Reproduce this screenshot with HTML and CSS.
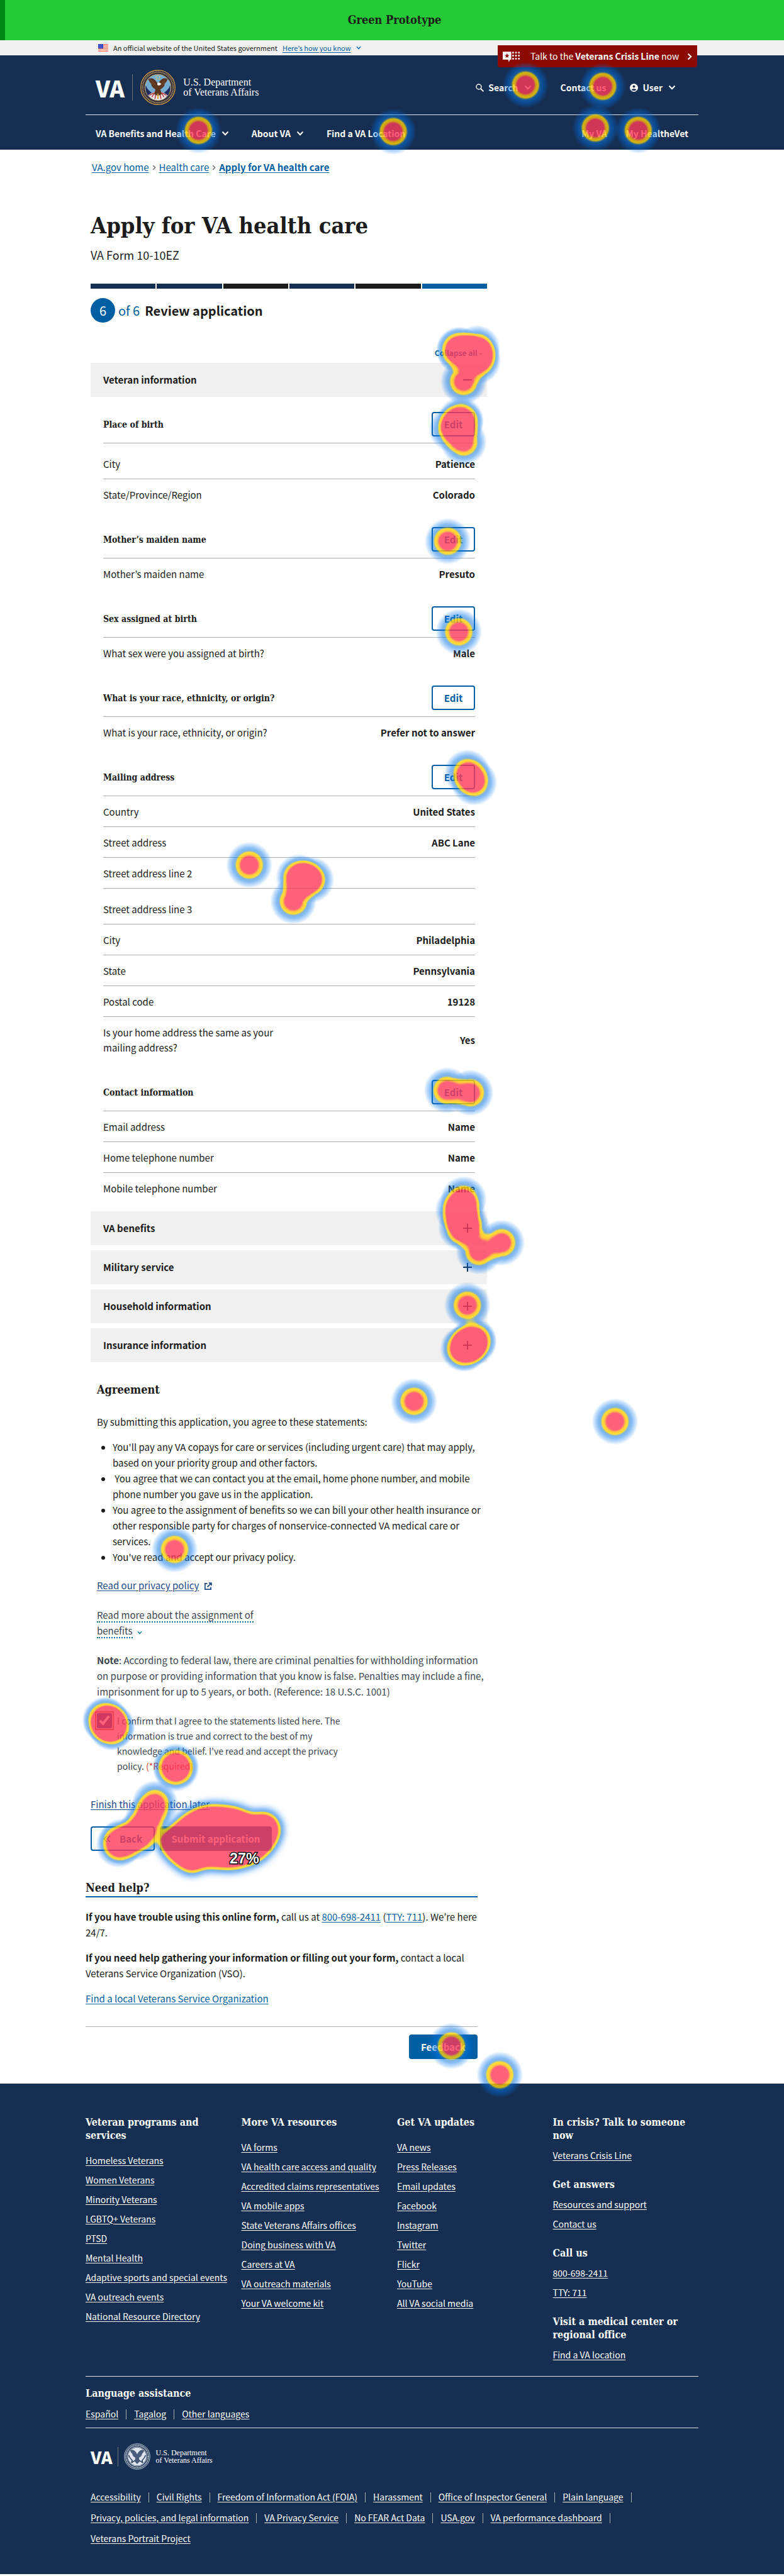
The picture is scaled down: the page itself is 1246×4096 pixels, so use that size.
FILE: index.html
```html
<!DOCTYPE html>
<html lang="en">
<head>
<meta charset="utf-8">
<meta name="viewport" content="width=device-width, initial-scale=1">
<title>Apply for VA health care</title>
<link rel="stylesheet" href="styles.css">
</head>
<body>
<svg class="sprite" aria-hidden="true">
  <symbol id="chev-down" viewBox="0 0 12 8"><path d="M1.5 1.5 6 6.2l4.500-4.700" fill="none" stroke="currentColor" stroke-width="2"/></symbol>
  <symbol id="chev-right" viewBox="0 0 8 12"><path d="M1.500 1.500 6.200 6l-4.700 4.500" fill="none" stroke="currentColor" stroke-width="2"/></symbol>
  <symbol id="plus" viewBox="0 0 14 14"><path d="M0 7h14M7 0v14" fill="none" stroke="currentColor" stroke-width="2"/></symbol>
  <symbol id="minus" viewBox="0 0 14 14"><path d="M0 7h14" fill="none" stroke="currentColor" stroke-width="2"/></symbol>
  <symbol id="seal" viewBox="0 0 60 60">
    <circle cx="30" cy="30" r="29.500" fill="#1d1c3d"/>
    <circle cx="30" cy="30" r="28.200" fill="none" stroke="#c9a24a" stroke-width="1.400"/>
    <circle cx="30" cy="30" r="25" fill="none" stroke="#c3a45c" stroke-width="2.800" stroke-dasharray="1.200 1"/>
    <circle cx="30" cy="30" r="21.600" fill="#74add0" stroke="#c9a24a" stroke-width="1"/>
    <path d="M10 26c2 7 6 9 10 13l-3 8C11 42 8.500 34 10 26zM50 26c-2 7-6 9-10 13l3 8c6-5 8.500-13 7-21z" fill="#232a5e"/>
    <path d="M14 43c5-4 9-6 16-6s11 2 16 6c-4 5-9 8-16 8s-12-3-16-8z" fill="#e9e4e2"/>
    <path d="M16 43l7-4M20 46l5-8M25 49l2-11M35 49l-2-11M40 46l-5-8M44 43l-7-4" stroke="#b7343f" stroke-width="1.500"/>
    <path d="M30 25c2-5 5-8 9-10 3 0 5 0 7 1-1 4-3 6-5 8 0 4-3 7-7 9l2 8-6 3-6-3 2-8c-4-2-7-5-7-9-2-2-4-4-5-8 2-1 4-1 7-1 4 2 7 5 9 10z" fill="#5a351f"/>
    <path d="M18 17l8 9M16 20l8 7M42 17l-8 9M44 20l-8 7" stroke="#8a5a35" stroke-width=".8"/>
    <path d="M29 23c2-2 6-1 6 2l-3 2-3-1z" fill="#fff"/>
    <path d="M30 40v9" stroke="#d8a93a" stroke-width="2"/>
    <g fill="#e8c94f"><circle cx="30" cy="11" r="1"/><circle cx="27" cy="13" r="1"/><circle cx="33" cy="13" r="1"/><circle cx="28" cy="16" r="1"/><circle cx="32" cy="16" r="1"/></g>
  </symbol>
  <symbol id="seal-mono" viewBox="0 0 60 60">
    <g fill="none" stroke="#dfe5ee">
      <circle cx="30" cy="30" r="29" stroke-width="1.200"/>
      <circle cx="30" cy="30" r="25.500" stroke-width="3" stroke-dasharray="1.400 1"/>
      <circle cx="30" cy="30" r="22" stroke-width="1.200"/>
    </g>
    <circle cx="30" cy="30" r="20.500" fill="#dfe5ee"/>
    <path d="M30 25c2-5 5-8 9-10 3 0 5 0 7 1-1 4-3 6-5 8 0 4-3 7-7 9l2 8-6 6-6-6 2-8c-4-2-7-5-7-9-2-2-4-4-5-8 2-1 4-1 7-1 4 2 7 5 9 10z" fill="#4a5c7b"/>
    <path d="M11 27c2 7 5 9 8 12l-2 5M49 27c-2 7-5 9-8 12l2 5M18 44l7-5M42 44l-7-5" stroke="#162e51" stroke-width="2" fill="none"/>
  </symbol>
</svg>

<div class="page">
  <div class="proto">Green Prototype</div>
  <div class="gov">
    <div class="wrap gov-in">
      <svg class="flag" viewBox="0 0 16 12"><path fill="#fff" d="M0 0h16v12H0z"/><path d="M0 .7h16M0 2.900h16M0 5.100h16M0 7.300h16M0 9.500h16M0 11.500h16" stroke="#f96f5b" stroke-width="1.200"/><path fill="#2a3bc4" d="M0 0h8v7H0z"/><path d="M1 1.500h6.500M1.500 3.500h6M1 5.500h6.500" stroke="#9fabf0" stroke-width=".8" stroke-dasharray="1 1"/></svg>
      <span>An official website of the United States government</span>
      <a href="#">Here’s how you know</a>
      <svg class="ic-s blue"><use href="#chev-down"/></svg>
      <a class="crisis" href="#">
        <svg class="crisis-ic" viewBox="0 0 29 18"><path fill="#fff" d="M0 1h14v13h-2l-2 4-1-4H0z"/><path fill="#8b0a03" d="M7 3.500l1.100 2.900h3L8.700 8.200l.9 2.900L7 9.400l-2.600 1.700.9-2.900-2.400-1.800h3z"/><g stroke="#fff" stroke-width="3" stroke-linecap="round" stroke-dasharray="0 4.800"><path d="M17 2.500h11M17 7.500h11M17 12.500h11"/></g></svg>
        <span class="crisis-text">Talk to the <b>Veterans Crisis Line</b> now</span>
        <svg class="crisis-go"><use href="#chev-right"/></svg>
      </a>
    </div>
  </div>

  <header class="top">
    <div class="wrap">
      <div class="brand-row">
        <a class="brand" href="#"><span class="va">VA</span><svg class="seal"><use href="#seal"/></svg><span class="dept">U.S. Department<br>of Veterans Affairs</span></a>
        <div class="tools">
          <button type="button" class="t-search"><svg class="ic-m" viewBox="0 0 13 13"><circle cx="5" cy="5" r="4" fill="none" stroke="currentColor" stroke-width="1.400"/><path d="M8 8l4.500 4.500" stroke="currentColor" stroke-width="1.800"/></svg>Search<svg class="ic-c"><use href="#chev-down"/></svg></button>
          <a href="#">Contact us</a>
          <button type="button"><svg class="ic-m" viewBox="0 0 14 14"><circle cx="7" cy="7" r="7" fill="#fff"/><circle cx="7" cy="4.800" r="2.100" fill="#162e51"/><path d="M2.800 10.500C3.500 8.300 10.500 8.300 11.200 10.500 9.500 12.600 4.500 12.600 2.800 10.500z" fill="#162e51"/></svg>User<svg class="ic-c"><use href="#chev-down"/></svg></button>
        </div>
      </div>
      <nav class="menu">
        <button type="button">VA Benefits and Health Care<svg class="ic-c"><use href="#chev-down"/></svg></button>
        <button type="button">About VA<svg class="ic-c"><use href="#chev-down"/></svg></button>
        <a href="#">Find a VA Location</a>
        <div class="mine"><a href="#">My VA</a><a href="#">My HealtheVet</a></div>
      </nav>
    </div>
  </header>

  <main class="wrap">
    <nav class="crumbs"><a href="#">VA.gov home</a><svg><use href="#chev-right"/></svg><a href="#">Health care</a><svg><use href="#chev-right"/></svg><a class="here" href="#">Apply for VA health care</a></nav>
    <div class="form">
      <h1>Apply for VA health care</h1>
      <p class="sub">VA Form 10-10EZ</p>
      <div class="progress"><i></i><i></i><i class="dark"></i><i></i><i class="dark"></i><i class="now"></i></div>
      <h2 class="step"><span class="num">6</span><span class="of">of 6</span>Review application</h2>
      <button type="button" class="collapse">Collapse all -</button>

      <h3 class="acc"><button type="button">Veteran information<svg><use href="#minus"/></svg></button></h3>
      <div class="review">
        <div class="head first"><h4>Place of birth</h4><button type="button" class="btn line">Edit</button></div>
        <dl>
          <div class="tall"><dt>City</dt><dd>Patience</dd></div>
          <div><dt>State/Province/Region</dt><dd>Colorado</dd></div>
        </dl>
        <div class="head"><h4>Mother’s maiden name</h4><button type="button" class="btn line">Edit</button></div>
        <dl><div><dt>Mother’s maiden name</dt><dd>Presuto</dd></div></dl>
        <div class="head"><h4>Sex assigned at birth</h4><button type="button" class="btn line">Edit</button></div>
        <dl><div><dt>What sex were you assigned at birth?</dt><dd>Male</dd></div></dl>
        <div class="head"><h4>What is your race, ethnicity, or origin?</h4><button type="button" class="btn line">Edit</button></div>
        <dl><div><dt>What is your race, ethnicity, or origin?</dt><dd>Prefer not to answer</dd></div></dl>
        <div class="head"><h4>Mailing address</h4><button type="button" class="btn line">Edit</button></div>
        <dl>
          <div><dt>Country</dt><dd>United States</dd></div>
          <div><dt>Street address</dt><dd>ABC Lane</dd></div>
          <div><dt>Street address line 2</dt><dd></dd></div>
          <div class="tall"><dt>Street address line 3</dt><dd></dd></div>
          <div><dt>City</dt><dd>Philadelphia</dd></div>
          <div><dt>State</dt><dd>Pennsylvania</dd></div>
          <div><dt>Postal code</dt><dd>19128</dd></div>
          <div><dt>Is your home address the same as your mailing address?</dt><dd>Yes</dd></div>
        </dl>
        <div class="head"><h4>Contact information</h4><button type="button" class="btn line">Edit</button></div>
        <dl>
          <div><dt>Email address</dt><dd>Name</dd></div>
          <div><dt>Home telephone number</dt><dd>Name</dd></div>
          <div><dt>Mobile telephone number</dt><dd>Name</dd></div>
        </dl>
      </div>
      <div class="accs">
        <h3 class="acc"><button type="button">VA benefits<svg><use href="#plus"/></svg></button></h3>
        <h3 class="acc"><button type="button">Military service<svg><use href="#plus"/></svg></button></h3>
        <h3 class="acc"><button type="button">Household information<svg><use href="#plus"/></svg></button></h3>
        <h3 class="acc"><button type="button">Insurance information<svg><use href="#plus"/></svg></button></h3>
      </div>

      <section class="agree">
        <h3>Agreement</h3>
        <p>By submitting this application, you agree to these statements:</p>
        <ul>
          <li>You'll pay any VA copays for care or services (including urgent care) that may apply, based on your priority group and other factors.</li>
          <li>&nbsp;You agree that we can contact you at the email, home phone number, and mobile phone number you gave us in the application.</li>
          <li>You agree to the assignment of benefits so we can bill your other health insurance or other responsible party for charges of nonservice-connected VA medical care or services.</li>
          <li>You've read and accept our privacy policy.</li>
        </ul>
        <p class="policy"><a class="navy" href="#">Read our privacy policy</a><svg viewBox="0 0 14 14"><path d="M6 2H2v10h10V8M8.500 1.200h4.300v4.300M12.500 1.500 6 8" fill="none" stroke="#1f4a8c" stroke-width="1.900"/></svg></p>
        <p class="more"><a href="#">Read more about the assignment of benefits</a><svg class="ic-s"><use href="#chev-down"/></svg></p>
        <p class="note"><b>Note</b>: According to federal law, there are criminal penalties for withholding information on purpose or providing information that you know is false. Penalties may include a fine, imprisonment for up to 5 years, or both. (Reference: 18 U.S.C. 1001)</p>
        <div class="confirm"><input type="checkbox" id="confirm" checked><label for="confirm">I confirm that I agree to the statements listed here. The information is true and correct to the best of my knowledge and belief. I've read and accept the privacy policy. <span>(*Required)</span></label></div>
      </section>
      <p class="later"><a class="navy" href="#">Finish this application later</a></p>
      <div class="actions">
        <button type="button" class="btn line back"><svg viewBox="0 0 12 12"><path d="M6 1 1.500 6 6 11M11 1 6.500 6 11 11" fill="none" stroke="currentColor" stroke-width="1.800"/></svg>Back</button>
        <button type="submit" class="btn fill">Submit application</button>
      </div>
    </div>

    <section class="help">
      <h2>Need help?</h2>
      <p><b>If you have trouble using this online form,</b> call us at <a href="#">800-698-2411</a> (<a href="#">TTY: 711</a>). We’re here 24/7.</p>
      <p><b>If you need help gathering your information or filling out your form,</b> contact a local Veterans Service Organization (VSO).</p>
      <p><a href="#">Find a local Veterans Service Organization</a></p>
      <div class="feedback"><button type="button" class="btn fill">Feedback</button></div>
    </section>
  </main>

  <footer>
    <div class="wrap">
      <div class="cols">
        <div class="list">
          <h2>Veteran programs and services</h2>
          <ul><li><a href="#">Homeless Veterans</a></li><li><a href="#">Women Veterans</a></li><li><a href="#">Minority Veterans</a></li><li><a href="#">LGBTQ+ Veterans</a></li><li><a href="#">PTSD</a></li><li><a href="#">Mental Health</a></li><li><a href="#">Adaptive sports and special events</a></li><li><a href="#">VA outreach events</a></li><li><a href="#">National Resource Directory</a></li></ul>
        </div>
        <div class="list">
          <h2>More VA resources</h2>
          <ul><li><a href="#">VA forms</a></li><li><a href="#">VA health care access and quality</a></li><li><a href="#">Accredited claims representatives</a></li><li><a href="#">VA mobile apps</a></li><li><a href="#">State Veterans Affairs offices</a></li><li><a href="#">Doing business with VA</a></li><li><a href="#">Careers at VA</a></li><li><a href="#">VA outreach materials</a></li><li><a href="#">Your VA welcome kit</a></li></ul>
        </div>
        <div class="list">
          <h2>Get VA updates</h2>
          <ul><li><a href="#">VA news</a></li><li><a href="#">Press Releases</a></li><li><a href="#">Email updates</a></li><li><a href="#">Facebook</a></li><li><a href="#">Instagram</a></li><li><a href="#">Twitter</a></li><li><a href="#">Flickr</a></li><li><a href="#">YouTube</a></li><li><a href="#">All VA social media</a></li></ul>
        </div>
        <div class="contact">
          <h2>In crisis? Talk to someone now</h2>
          <ul><li><a href="#">Veterans Crisis Line</a></li></ul>
          <h2>Get answers</h2>
          <ul><li><a href="#">Resources and support</a></li><li><a href="#">Contact us</a></li></ul>
          <h2>Call us</h2>
          <ul><li><a href="#">800-698-2411</a></li><li><a href="#">TTY: 711</a></li></ul>
          <h2>Visit a medical center or regional office</h2>
          <ul><li><a href="#">Find a VA location</a></li></ul>
        </div>
      </div>
      <div class="lang">
        <h2>Language assistance</h2>
        <ul class="inline"><li><a href="#">Español</a></li><li><a href="#">Tagalog</a></li><li><a href="#">Other languages</a></li></ul>
      </div>
      <div class="base">
        <a class="brand small" href="#"><span class="va">VA</span><svg class="seal"><use href="#seal-mono"/></svg><span class="dept">U.S. Department<br>of Veterans Affairs</span></a>
        <ul class="inline wide"><li><a href="#">Accessibility</a></li><li><a href="#">Civil Rights</a></li><li><a href="#">Freedom of Information Act (FOIA)</a></li><li><a href="#">Harassment</a></li><li><a href="#">Office of Inspector General</a></li><li><a href="#">Plain language</a></li><li><a href="#">Privacy, policies, and legal information</a></li><li><a href="#">VA Privacy Service</a></li><li><a href="#">No FEAR Act Data</a></li><li><a href="#">USA.gov</a></li><li><a href="#">VA performance dashboard</a></li><li><a href="#">Veterans Portrait Project</a></li></ul>
      </div>
    </div>
  </footer>

  <!-- click heatmap laid over the prototype -->
  <svg class="heat" viewBox="0 0 1280 4209" aria-hidden="true">
    <defs>
      <radialGradient id="spot">
        <stop offset="0" stop-opacity=".9"/><stop offset=".36" stop-opacity=".6"/><stop offset=".52" stop-opacity=".43"/><stop offset=".63" stop-opacity=".3"/><stop offset=".8" stop-opacity=".14"/><stop offset="1" stop-opacity="0"/>
      </radialGradient>
      <filter id="soft" filterUnits="userSpaceOnUse" x="200" y="2900" width="320" height="220"><feGaussianBlur stdDeviation="8"/></filter>
      <filter id="ramp" filterUnits="userSpaceOnUse" x="0" y="0" width="1280" height="4209" color-interpolation-filters="sRGB">
        <feColorMatrix values="0 0 0 1 0  0 0 0 1 0  0 0 0 1 0  0 0 0 1 0"/>
        <feComponentTransfer>
          <feFuncR type="table" tableValues="0 0 0 .1 1 1 1 1 1 1 1"/>
          <feFuncG type="table" tableValues=".45 .45 .45 .47 .85 .75 .22 .22 .22 .22 .22"/>
          <feFuncB type="table" tableValues=".93 .93 .91 .82 0 .05 .35 .35 .35 .35 .35"/>
          <feFuncA type="table" tableValues="0 .26 .46 .56 .8 .8 .8 .8 .8 .8 .8"/>
        </feComponentTransfer>
      </filter>
    </defs>
    <g filter="url(#ramp)">
      <g fill="url(#spot)">
        <circle cx="324" cy="213" r="38"/><circle cx="642" cy="215" r="38"/><circle cx="858" cy="139" r="38"/><circle cx="984" cy="141" r="38"/><circle cx="972" cy="209" r="38"/><circle cx="1042" cy="213" r="38"/>
        <circle cx="750" cy="571" r="38"/><circle cx="750" cy="573" r="38"/><circle cx="779" cy="569" r="38"/><circle cx="779" cy="580" r="38"/><circle cx="780" cy="590" r="38"/><circle cx="757" cy="623" r="38"/>
        <circle cx="752" cy="686" r="38"/><circle cx="752" cy="691" r="38"/><circle cx="738" cy="701" r="38"/><circle cx="757" cy="722" r="38"/>
        <circle cx="731" cy="884" r="38"/><circle cx="749" cy="1032" r="38"/>
        <circle cx="763" cy="1262" r="38"/><circle cx="774" cy="1278" r="38"/>
        <circle cx="407" cy="1413" r="38"/><circle cx="488" cy="1433" r="38"/><circle cx="494" cy="1436" r="38"/><circle cx="508" cy="1437" r="38"/><circle cx="479" cy="1472" r="38"/>
        <circle cx="730" cy="1781" r="38"/><circle cx="768" cy="1785" r="38"/>
        <circle cx="757" cy="1959" r="38"/><circle cx="748" cy="1977" r="38"/><circle cx="755" cy="1982" r="38"/><circle cx="763" cy="2007" r="38"/><circle cx="753" cy="2005" r="38"/><circle cx="782" cy="2044" r="38"/><circle cx="819" cy="2030" r="38"/>
        <circle cx="763" cy="2132" r="38"/><circle cx="756" cy="2203" r="38"/><circle cx="760" cy="2202" r="38"/><circle cx="773" cy="2189" r="38"/><circle cx="773" cy="2193" r="38"/>
        <circle cx="676" cy="2289" r="38"/><circle cx="1004" cy="2322" r="38"/><circle cx="285" cy="2531" r="38"/>
        <circle cx="172" cy="2809" r="38"/><circle cx="173" cy="2811" r="38"/><circle cx="182" cy="2822" r="38"/><circle cx="183" cy="2820" r="38"/>
        <circle cx="287" cy="2885" r="38"/><circle cx="287" cy="2889" r="38"/>
        <circle cx="253" cy="2946" r="38"/><circle cx="242" cy="2968" r="38"/><circle cx="232" cy="2990" r="38"/><circle cx="222" cy="3001" r="38"/><circle cx="199" cy="3008" r="38"/><circle cx="194" cy="3013" r="38"/>
        <circle cx="737" cy="3342" r="38"/><circle cx="816" cy="3389" r="38"/>
      </g>
      <path filter="url(#soft)" fill-opacity=".95" d="M260 3002C264 2992 277 2988 287 2978S312 2957 328 2952s38-2 52 0 21 9 32 11 18-6 30 1c12 7 17 20 14 32s-14 29-26 38-32 16-48 18-32-3-48-1c-10 2-13 8-22 7s-17-7-26-14-29-27-26-42z"/>
    </g>
    <text class="pct" x="399" y="3044" text-anchor="middle">27%</text>
  </svg>
</div>
</body>
</html>
```

FILE: styles.css
```css
* { box-sizing: border-box; }
body, h1, h2, h3, h4, p, ul, dl, dd { margin: 0; }
body {
  background: #fff;
  color: #1b1b1b;
  font: 15px/25px "Noto Sans CJK KR", "Open Sans", sans-serif;
}
ul { padding: 0; list-style: none; }
a { color: #005ea2; text-underline-offset: 2px; }
button { font: inherit; color: inherit; background: none; border: 0; padding: 0; }
h1, h2, h3, h4, .proto { font-family: "DejaVu Serif Condensed", "DejaVu Serif", serif; font-weight: 700; }
.sprite { position: absolute; width: 0; height: 0; }
.page { position: relative; overflow: hidden; }
.wrap { max-width: 974px; margin: 0 auto; }

.proto {
  background: #23ca35;
  border-left: 8px solid #008817;
  font-size: 18px;
  line-height: 64px;
  text-align: center;
}

/* government banner */
.gov { background: #f0f0f0; }
.gov-in { position: relative; display: flex; align-items: center; gap: 8px; height: 24px; padding-left: 20px; font-size: 11px; }
.flag { width: 16px; height: 12px; }
.ic-s { width: 8px; height: 6px; }
.blue { color: #005ea2; }
.crisis {
  position: absolute; top: 8px; right: 2px;
  display: flex; align-items: center;
  width: 317px; height: 35px; padding: 0 8px;
  background: #8b0a03; border-radius: 0 0 4px 4px;
  color: #fff; font-size: 14px; text-decoration: none;
}
.crisis-ic { width: 28px; height: 18px; margin-right: 16px; }
.crisis-go { width: 8px; height: 12px; margin-left: auto; }

/* header */
.top { background: #162e51; color: #fff; font-size: 14px; font-weight: 700; }
.top a { color: #fff; text-decoration: none; }
.brand-row { display: flex; align-items: center; height: 95px; padding: 8px 16px 0; border-bottom: 1px solid #dfe1e2; }
.brand { display: flex; align-items: center; color: #fff; text-decoration: none; }
.va { padding-right: 12px; border-right: 1px solid #71767a; font-size: 36px; font-weight: 900; line-height: 42px; }
.seal { width: 58px; height: 58px; margin: 0 11px; }
.dept { font: 400 16px/16px "Liberation Serif", serif; }
.tools { display: flex; align-items: center; gap: 38px; margin-left: auto; padding-right: 20px; }
.tools button, .menu button { display: flex; align-items: center; font-weight: 700; }
.t-search { margin-right: 8px; }
.ic-m { width: 13px; height: 13px; margin-right: 7px; }
.ic-c { width: 12px; height: 8px; margin-left: 9px; }
.menu { display: flex; align-items: center; gap: 36px; height: 55px; padding: 3px 16px 0; }
.mine { display: flex; gap: 30px; margin-left: auto; }

/* form */
.crumbs { display: flex; align-items: center; gap: 5px; padding: 16px 10px 0; line-height: 24px; }
.crumbs svg { width: 6px; height: 9px; color: #71767a; }
.here { font-weight: 700; }
.form { max-width: 638px; padding-left: 8px; }
h1 { padding-top: 56px; font-size: 36px; line-height: 48px; }
.sub { padding-top: 10px; font-size: 18px; line-height: 26px; }
.progress { display: flex; gap: 2px; padding-top: 33px; }
.progress i { flex: 1; height: 8px; background: #162e51; }
.progress .dark { background: #1b1b1b; }
.progress .now { background: #005ea2; }
.step { display: flex; align-items: center; padding-top: 15px; font: 700 20px/26px "Noto Sans CJK KR", sans-serif; }
.num { width: 39px; border-radius: 50%; background: #005ea2; color: #fff; font-weight: 400; line-height: 39px; text-align: center; }
.of { padding: 0 8px 0 5px; color: #005ea2; font-weight: 400; }
.collapse { display: block; margin: 38px 8px 6px auto; color: #005ea2; font-size: 12px; font-weight: 700; line-height: 20px; }
.acc button {
  display: flex; align-items: center; justify-content: space-between;
  width: 100%; height: 54px; padding: 0 24px 0 20px;
  background: #f0f0f0; font: 700 15px/24px "Noto Sans CJK KR", sans-serif;
}
.acc svg { width: 14px; height: 14px; color: #162e51; }
.review { padding: 0 19px 12px 20px; }
.head { display: flex; align-items: center; justify-content: space-between; padding: 27px 0 10px; border-bottom: 1px solid #a9aeb1; }
.head.first { padding-top: 24px; }
.head h4 { font-size: 14px; line-height: 24px; }
.btn { height: 39px; border-radius: 4px; font-weight: 700; line-height: 24px; }
.line { border: 2px solid #005ea2; color: #005ea2; }
.head .btn { width: 69px; }
.fill { background: #005ea2; color: #fff; }
dl > div { display: flex; align-items: center; justify-content: space-between; min-height: 49px; padding: 13px 0 11px; border-bottom: 1px solid #a9aeb1; line-height: 24px; }
dl > div:last-child { border-bottom: 0; padding-bottom: 12px; }
dl > .tall { padding: 21px 0 11px; }
dt { max-width: 290px; }
dd { font-weight: 700; }
.accs { display: grid; gap: 8px; }

/* agreement */
.agree { padding: 30px 8px 0 10px; }
.agree h3 { margin-bottom: 24px; font-size: 18px; line-height: 28px; }
.agree ul { margin: 15px 0 20px; padding-left: 25px; list-style: disc; }
.navy { color: #1f4a8c; }
.policy svg { width: 13px; height: 13px; margin-left: 8px; vertical-align: -2px; }
.more { max-width: 270px; margin: 22px 0; color: #00719f; }
.more a { border-bottom: 2px dotted #00719f; color: #3d4551; text-decoration: none; }
.more svg { margin-left: 7px; }
.note, .confirm { color: #3d4551; }
.note { margin-right: -4px; }
.confirm { display: flex; gap: 8px; max-width: 400px; margin-top: 22px; font-size: 14px; line-height: 24px; }
.confirm input { flex: none; width: 24px; height: 24px; margin: 0; accent-color: #1b3a78; outline: 2px solid #e8632c; outline-offset: 1px; }
.confirm span { color: #d83933; }
.later { padding-top: 36px; }
.actions { display: flex; gap: 8px; padding-top: 23px; }
.actions .fill { width: 178px; }
.back { display: flex; align-items: center; justify-content: center; gap: 14px; width: 102px; }
.back svg { width: 12px; height: 12px; }

/* help */
.help { max-width: 623px; padding-top: 46px; }
.help h2 { border-bottom: 2px solid #005ea2; margin-bottom: 18px; font-size: 18px; line-height: 26px; }
.help p { margin-bottom: 15px; }
.feedback { display: flex; justify-content: flex-end; margin-top: 32px; padding: 12px 0 39px; border-top: 1px solid #a9aeb1; }
.feedback .btn { width: 109px; }

/* footer */
footer { background: #162e51; color: #fff; font-size: 14px; }
footer a { color: #fff; }
footer h2 { font-size: 16px; line-height: 21px; }
.cols { display: grid; grid-template-columns: repeat(4, 1fr); gap: 16px; padding: 51px 0 18px; }
footer li { line-height: 31px; white-space: nowrap; }
.list h2 { margin-bottom: 14px; }
.contact h2 { margin-bottom: 6px; }
.contact ul + h2 { margin-top: 20px; }
.lang { padding: 16px 0 6px; border: solid #dfe1e2; border-width: 1px 0; }
.lang h2 { margin-bottom: 7px; }
.inline { display: flex; flex-wrap: wrap; }
.inline li { display: flex; align-items: center; }
.inline li:not(:last-child)::after { content: ""; width: 1px; height: 16px; margin: 0 12px; background: #a9aeb1; }
.base { padding: 24px 8px 40px; }
.wide { padding-top: 27px; }
.wide li { line-height: 33px; }
.small .va { padding-right: 8px; font-size: 27px; line-height: 31px; }
.small .seal { width: 42px; height: 42px; margin: 0 9px; }
.small .dept { font-size: 12px; line-height: 12px; }

/* heatmap */
.heat { position: absolute; top: 0; left: 0; width: 100%; height: auto; pointer-events: none; }
.pct { font: 700 24px "Liberation Sans", Arial, sans-serif; fill: #fff; stroke: #000; stroke-width: 3px; paint-order: stroke; }
```
